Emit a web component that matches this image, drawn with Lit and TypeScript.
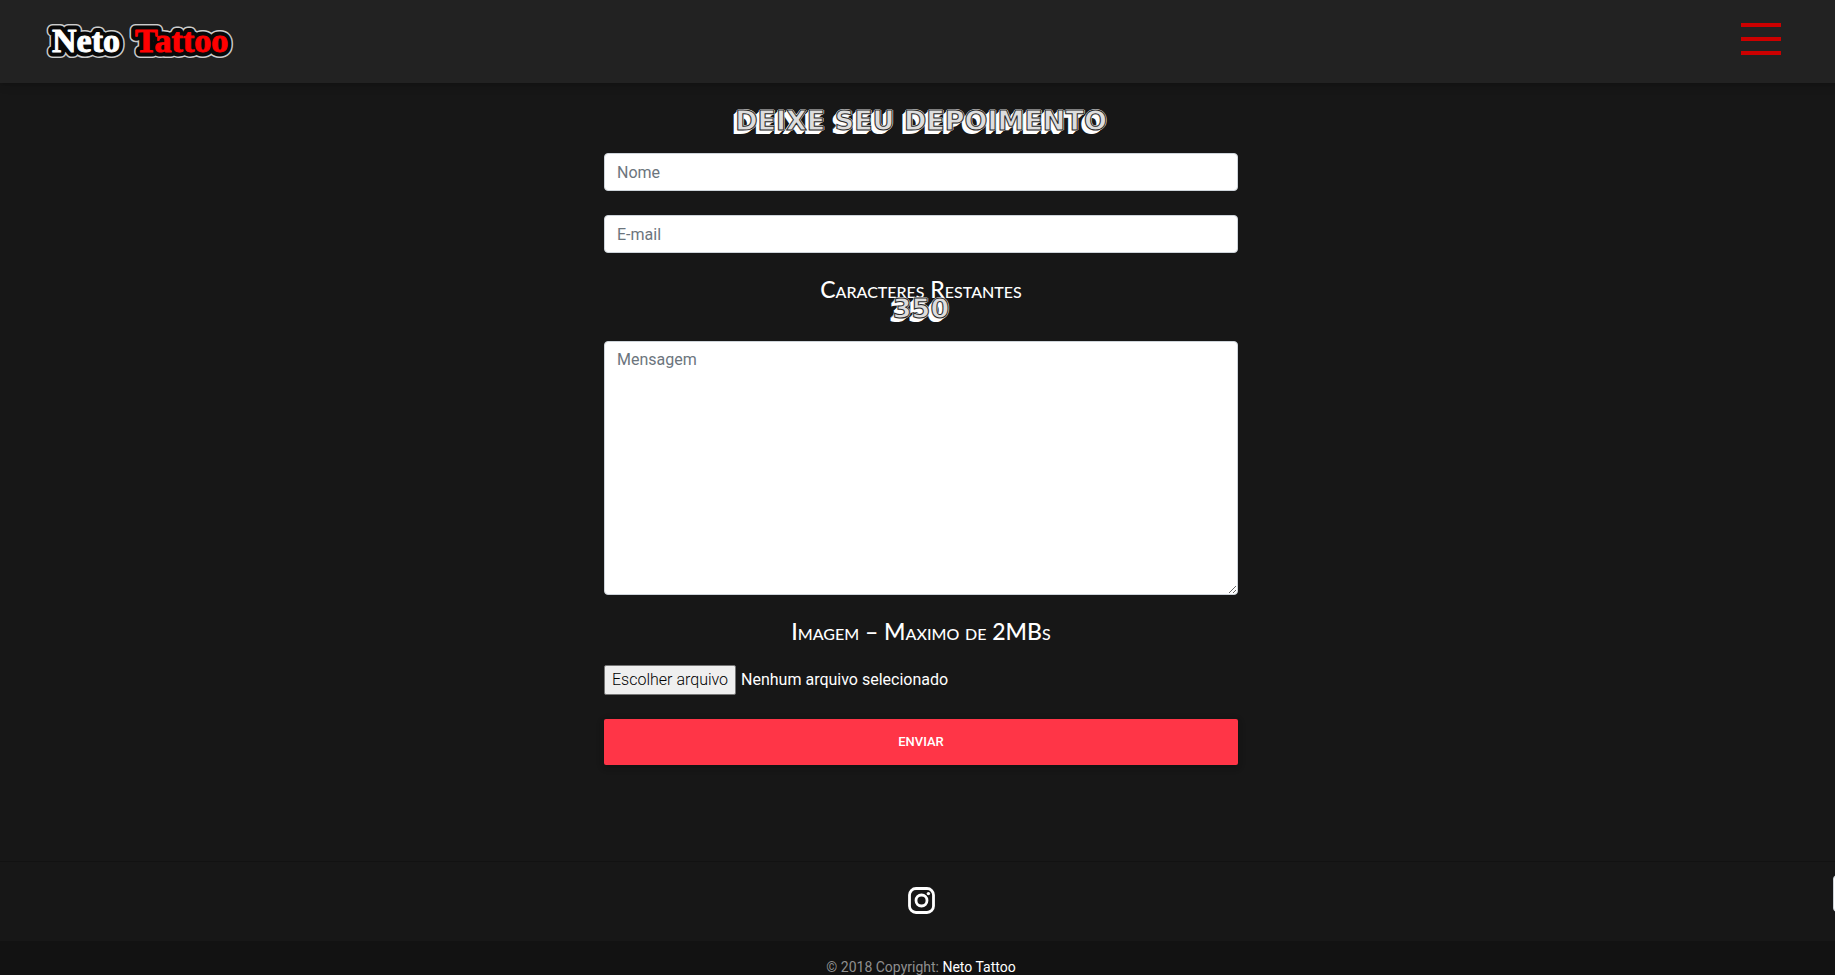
import { LitElement, html, svg, css } from "lit";
import { customElement, state, query } from "lit/decorators.js";

const LIMIT = 350;

@customElement("app-root")
export class AppRoot extends LitElement {
  static styles = css`
    :host {
      display: block;
      min-height: 100vh;
      overflow: hidden;
      background: #171717;
      color: #fff;
      font: 300 16px/24px Roboto, sans-serif;
    }
    *, *::before, *::after { box-sizing: border-box; }
    .page {
      min-height: 100vh;
      width: calc(100% + 7px);
      display: flex;
      flex-direction: column;
      position: relative;
    }
    header {
      display: flex;
      align-items: center;
      justify-content: space-between;
      height: 83px;
      flex: none;
      padding: 0 61px 5px 44px;
      background: #222;
      box-shadow: 0 2px 5px rgba(0, 0, 0, 0.16), 0 2px 10px rgba(0, 0, 0, 0.12);
    }
    .brand { display: block; line-height: 0; }
    .logo {
      font-family: "Liberation Serif", serif;
      font-weight: 700;
      font-size: 34px;
      stroke-linejoin: round;
    }
    .rim { fill: #ccc; stroke: #ccc; stroke-width: 12px; }
    .edge { fill: #080808; stroke: #080808; stroke-width: 9px; }
    .white { fill: #fff; stroke: #fff; stroke-width: 1px; }
    .red { fill: #f00; stroke: #f00; stroke-width: 1px; }
    .menu {
      display: grid;
      gap: 10px;
      width: 40px;
      padding: 0;
      border: 0;
      background: none;
      cursor: pointer;
    }
    .menu span { height: 4px; background: #c00; }
    main {
      flex: 1 0 auto;
      display: flex;
      justify-content: center;
      padding-top: 22px;
    }
    form {
      width: 35%;
      max-width: 634px;
      min-width: 280px;
      display: flex;
      flex-direction: column;
    }
    h1, output {
      display: block;
      margin: 0;
      font: 700 27px/32px "DejaVu Sans", sans-serif;
      text-align: center;
      color: #ddd;
      -webkit-text-stroke: 1px #2a2a2a;
      text-shadow: 1px 0 #eee, 0 -1px #eee, -1px 0 #eee, 0 1px #eee,
        -1px 1px #fff, -2px 2px #fff, -3px 3px #fff, -4px 4px #fff;
    }
    h1 { margin-bottom: 16px; white-space: nowrap; }
    .field {
      display: block;
      width: 100%;
      height: 38px;
      margin: 0 0 24px;
      padding: 6px 12px;
      border: 1px solid #ced4da;
      border-radius: 4px;
      background: #fff;
      color: #495057;
      font: 400 16px/24px Roboto, sans-serif;
      outline: none;
    }
    .field::placeholder { color: #6c757d; opacity: 1; }
    .message { height: 254px; margin: 0 0 24px; resize: vertical; }
    .caption {
      font: 500 23px/24px Lato, sans-serif;
      font-variant: small-caps;
      text-align: center;
    }
    .caption.tight { line-height: 20px; margin-top: 2px; }
    output { line-height: 20px; margin-bottom: 22px; }
    .file {
      display: flex;
      align-items: center;
      gap: 5px;
      margin: 22px 0 24px;
      font-weight: 400;
    }
    .pick {
      height: 30px;
      padding: 1px 7px;
      border: 1px solid #767676;
      border-radius: 2px;
      background: #efefef;
      color: #000;
      font: 300 16px/24px Roboto, sans-serif;
    }
    .send {
      height: 46px;
      border: 0;
      border-radius: 2px;
      background: #ff3547;
      color: #fff;
      font: 500 13px/20px Roboto, sans-serif;
      text-transform: uppercase;
      box-shadow: 0 2px 5px rgba(0, 0, 0, 0.16), 0 2px 10px rgba(0, 0, 0, 0.12);
    }
    footer { flex: none; text-align: center; border-top: 1px solid #121212; }
    .social { display: flex; justify-content: center; padding: 25px 0 27px; }
    .social a { display: block; color: #fff; line-height: 0; }
    .copy {
      height: 34px;
      padding-top: 14px;
      overflow: hidden;
      background: #121212;
      color: #8f8f8f;
      font-size: 14px;
      font-weight: 400;
      line-height: 24px;
    }
    .copy a { color: #fff; text-decoration: none; }
    .badge {
      position: absolute;
      right: 0;
      bottom: 63px;
      width: 9px;
      height: 37px;
      border: 1px solid #ced4da;
      border-radius: 4px;
      background: #fff;
    }
  `;

  @state() private left = LIMIT;
  @state() private fileName = "Nenhum arquivo selecionado";
  @query("input[type=file]") private picker!: HTMLInputElement;

  private count(e: Event) {
    this.left = LIMIT - (e.target as HTMLTextAreaElement).value.length;
  }

  private picked() {
    this.fileName = this.picker.files?.[0]?.name ?? "Nenhum arquivo selecionado";
  }

  private word(x: number, word: string, tone: string) {
    return svg`
      <text class="rim" x=${x} y="43" aria-hidden="true">${word}</text>
      <text class="edge" x=${x} y="43" aria-hidden="true">${word}</text>
      <text class=${tone} x=${x} y="43">${word}</text>`;
  }

  render() {
    return html`
      <div class="page">
        <header>
          <a class="brand" href="#" aria-label="Neto Tattoo">
            <svg class="logo" width="196" height="60" viewBox="0 0 196 60">
              ${this.word(8, "Neto", "white")}
              ${this.word(91, "Tattoo", "red")}
            </svg>
          </a>
          <button class="menu" type="button" aria-label="Menu">
            <span></span><span></span><span></span>
          </button>
        </header>
        <main>
          <form @submit=${(e: Event) => e.preventDefault()}>
            <h1>DEIXE SEU DEPOIMENTO</h1>
            <input class="field" type="text" placeholder="Nome" aria-label="Nome" />
            <input class="field" type="email" placeholder="E-mail" aria-label="E-mail" />
            <label class="caption tight" for="message">Caracteres Restantes</label>
            <output for="message">${this.left}</output>
            <textarea class="field message" id="message" maxlength=${LIMIT}
              placeholder="Mensagem" @input=${this.count}></textarea>
            <label class="caption" for="image">Imagem – Maximo de 2MBs</label>
            <div class="file">
              <input id="image" type="file" accept="image/*" hidden @change=${this.picked} />
              <button class="pick" type="button" @click=${() => this.picker.click()}>Escolher arquivo</button>
              <span>${this.fileName}</span>
            </div>
            <button class="send" type="submit">Enviar</button>
          </form>
        </main>
        <footer>
          <div class="social">
            <a href="#" aria-label="Instagram">
              <svg width="27" height="27" viewBox="0 0 27 27" fill="none" stroke="currentColor">
                <rect x="1.5" y="1.5" width="24" height="24" rx="6.5" stroke-width="2.8" />
                <circle cx="13.5" cy="13.5" r="5.5" stroke-width="2.8" />
                <circle cx="20.4" cy="6.6" r="1.7" fill="currentColor" stroke="none" />
              </svg>
            </a>
          </div>
          <div class="copy">© 2018 Copyright: <a href="#">Neto Tattoo</a></div>
        </footer>
        <div class="badge"></div>
      </div>
    `;
  }
}
